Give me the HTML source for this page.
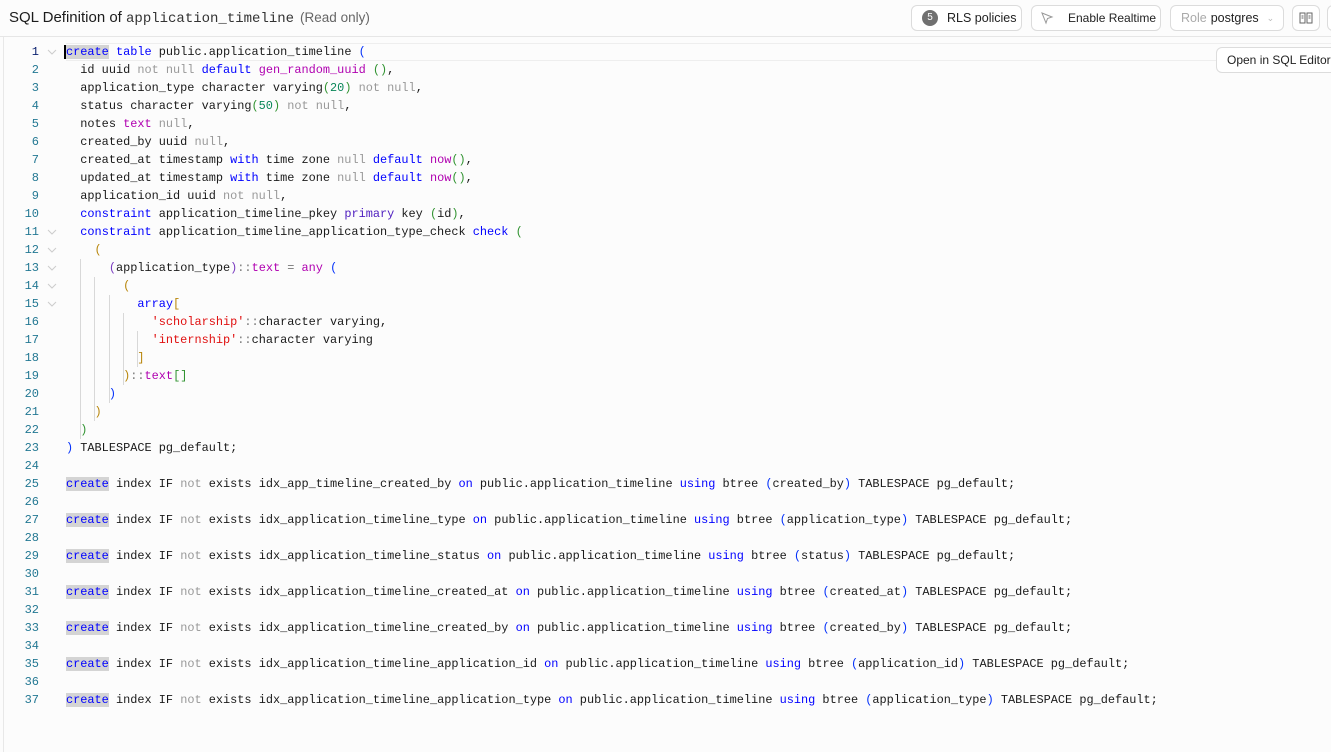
<!DOCTYPE html>
<html><head><meta charset="utf-8"><style>
*{margin:0;padding:0;box-sizing:border-box}
body{width:1331px;height:752px;overflow:hidden;background:#fcfcfc;font-family:"Liberation Sans",sans-serif;position:relative}
.hdr{position:absolute;left:0;top:0;width:1331px;height:37px;border-bottom:1px solid #e6e6e6;background:#fcfcfc}
.title{position:absolute;left:9px;top:9px;font-size:15px;color:#1c1c1c;white-space:nowrap}
.title .m{font-family:"Liberation Mono",monospace;font-size:14px;color:#333}
.title .r{font-size:13.5px;color:#666;margin-left:6px}
.btn{position:absolute;top:5px;height:26px;border:1px solid #dcdcdc;border-radius:6px;background:#fff;font-size:12.5px;color:#222;display:flex;align-items:center;padding:0 10px;white-space:nowrap}
.btn svg,.btn span{flex-shrink:0}
.lb{position:absolute;left:3px;top:37px;width:1px;height:715px;background:#e8e8e8}
.code{position:absolute;left:0;top:43px;width:1331px;font-family:"Liberation Mono",monospace;font-size:11.9px}
.ln{height:18px;line-height:18px;position:relative;white-space:pre;color:#1a1a1a}
.ln .n{position:absolute;left:0;width:39px;text-align:right;color:#237893;font-size:12px}
.ln .f{position:absolute;left:47px;top:5px;width:10px;height:8px}
.ln .c{position:absolute;left:66px}
.k{color:#0000ff}.g{color:#999}.p{color:#b000b0}.d{color:#098658}.s{color:#e01010}.o{color:#777}
.b1{color:#0431fa}.b2{color:#319331}.b3{color:#b8860b}.b4{color:#7a3cc0}
.hl{background:#d4d4d4}
.gd{position:absolute;width:1px;background:#d8d8d8}
</style></head><body>
<div class="hdr">
<div class="title">SQL Definition of <span class="m">application_timeline</span><span class="r">(Read only)</span></div>
<div class="btn" style="left:911px;width:111px"><span style="display:inline-block;width:16px;height:16px;border-radius:50%;background:#707070;color:#fff;font-size:10px;text-align:center;line-height:16px;margin-right:9px">5</span>RLS policies</div>
<div class="btn" style="left:1031px;width:130px;padding:0 8px"><svg width="14" height="14" viewBox="0 0 14 14" style="margin-right:14px"><path d="M2 2 L12 6 L7.5 7.5 L6 12 Z" fill="none" stroke="#999" stroke-width="1"/></svg><span style="font-size:12px">Enable Realtime</span></div>
<div class="btn" style="left:1170px;width:114px"><span style="color:#aaa;margin-right:4px">Role</span>postgres<span style="color:#bbb;font-size:9px;margin-left:8px">&#8964;</span></div>
<div class="btn" style="left:1292px;width:28px;padding:0;justify-content:center"><svg width="14" height="12" viewBox="0 0 14 12"><path d="M1 1h5v10H1z M8 1h5v10H8z M2.5 4h2M2.5 6h2M9.5 4h2M9.5 6h2" fill="none" stroke="#666" stroke-width="1"/></svg></div>
<div class="btn" style="left:1327px;width:20px;padding:0"></div>
</div>
<div class="lb"></div>
<div style="position:absolute;left:66px;top:43px;width:1265px;height:18px;border-top:1px solid #eee;border-bottom:1px solid #eee"></div>
<div class="btn" style="left:1216px;top:47px;height:26px;width:130px;font-size:12px">Open in SQL Editor</div>
<div class="code">
<div class="gd" style="left:80px;top:216px;height:180px"></div>
<div class="gd" style="left:94px;top:234px;height:144px"></div>
<div class="gd" style="left:109px;top:252px;height:108px"></div>
<div class="gd" style="left:123px;top:270px;height:72px"></div>
<div class="gd" style="left:137px;top:288px;height:36px"></div>
<div class="ln"><span class="n" style="color:#0b216f">1</span><svg class="f" viewBox="0 0 10 8"><path d="M1 2l4 4 4-4" fill="none" stroke="#ccc"/></svg><span class="c"><span style="border-left:2px solid #000;margin-left:-2px"></span><span class="k hl">create</span> <span class="k">table</span> public.application_timeline <span class="b1">(</span></span></div>
<div class="ln"><span class="n">2</span><span class="c">  id uuid <span class="g">not null</span> <span class="k">default</span> <span class="p">gen_random_uuid</span> <span class="b2">()</span>,</span></div>
<div class="ln"><span class="n">3</span><span class="c">  application_type character varying<span class="b2">(</span><span class="d">20</span><span class="b2">)</span> <span class="g">not null</span>,</span></div>
<div class="ln"><span class="n">4</span><span class="c">  status character varying<span class="b2">(</span><span class="d">50</span><span class="b2">)</span> <span class="g">not null</span>,</span></div>
<div class="ln"><span class="n">5</span><span class="c">  notes <span class="p">text</span> <span class="g">null</span>,</span></div>
<div class="ln"><span class="n">6</span><span class="c">  created_by uuid <span class="g">null</span>,</span></div>
<div class="ln"><span class="n">7</span><span class="c">  created_at timestamp <span class="k">with</span> time zone <span class="g">null</span> <span class="k">default</span> <span class="p">now</span><span class="b2">()</span>,</span></div>
<div class="ln"><span class="n">8</span><span class="c">  updated_at timestamp <span class="k">with</span> time zone <span class="g">null</span> <span class="k">default</span> <span class="p">now</span><span class="b2">()</span>,</span></div>
<div class="ln"><span class="n">9</span><span class="c">  application_id uuid <span class="g">not null</span>,</span></div>
<div class="ln"><span class="n">10</span><span class="c">  <span class="k">constraint</span> application_timeline_pkey <span style="color:#5020c0">primary</span> key <span class="b2">(</span>id<span class="b2">)</span>,</span></div>
<div class="ln"><span class="n">11</span><svg class="f" viewBox="0 0 10 8"><path d="M1 2l4 4 4-4" fill="none" stroke="#ccc"/></svg><span class="c">  <span class="k">constraint</span> application_timeline_application_type_check <span class="k">check</span> <span class="b2">(</span></span></div>
<div class="ln"><span class="n">12</span><svg class="f" viewBox="0 0 10 8"><path d="M1 2l4 4 4-4" fill="none" stroke="#ccc"/></svg><span class="c">    <span class="b3">(</span></span></div>
<div class="ln"><span class="n">13</span><svg class="f" viewBox="0 0 10 8"><path d="M1 2l4 4 4-4" fill="none" stroke="#ccc"/></svg><span class="c">      <span class="b4">(</span>application_type<span class="b4">)</span><span class="o">::</span><span class="p">text</span> <span class="o">=</span> <span class="p">any</span> <span class="b1">(</span></span></div>
<div class="ln"><span class="n">14</span><svg class="f" viewBox="0 0 10 8"><path d="M1 2l4 4 4-4" fill="none" stroke="#ccc"/></svg><span class="c">        <span class="b3">(</span></span></div>
<div class="ln"><span class="n">15</span><svg class="f" viewBox="0 0 10 8"><path d="M1 2l4 4 4-4" fill="none" stroke="#ccc"/></svg><span class="c">          <span class="k">array</span><span class="b3">[</span></span></div>
<div class="ln"><span class="n">16</span><span class="c">            <span class="s">'scholarship'</span><span class="o">::</span>character varying,</span></div>
<div class="ln"><span class="n">17</span><span class="c">            <span class="s">'internship'</span><span class="o">::</span>character varying</span></div>
<div class="ln"><span class="n">18</span><span class="c">          <span class="b3">]</span></span></div>
<div class="ln"><span class="n">19</span><span class="c">        <span class="b3">)</span><span class="o">::</span><span class="p">text</span><span class="b2">[]</span></span></div>
<div class="ln"><span class="n">20</span><span class="c">      <span class="b1">)</span></span></div>
<div class="ln"><span class="n">21</span><span class="c">    <span class="b3">)</span></span></div>
<div class="ln"><span class="n">22</span><span class="c">  <span class="b2">)</span></span></div>
<div class="ln"><span class="n">23</span><span class="c"><span class="b1">)</span> TABLESPACE pg_default;</span></div>
<div class="ln"><span class="n">24</span></div>
<div class="ln"><span class="n">25</span><span class="c"><span class="k hl">create</span> index IF <span class="g">not</span> exists idx_app_timeline_created_by <span class="k">on</span> public.application_timeline <span class="k">using</span> btree <span class="b1">(</span>created_by<span class="b1">)</span> TABLESPACE pg_default;</span></div>
<div class="ln"><span class="n">26</span></div>
<div class="ln"><span class="n">27</span><span class="c"><span class="k hl">create</span> index IF <span class="g">not</span> exists idx_application_timeline_type <span class="k">on</span> public.application_timeline <span class="k">using</span> btree <span class="b1">(</span>application_type<span class="b1">)</span> TABLESPACE pg_default;</span></div>
<div class="ln"><span class="n">28</span></div>
<div class="ln"><span class="n">29</span><span class="c"><span class="k hl">create</span> index IF <span class="g">not</span> exists idx_application_timeline_status <span class="k">on</span> public.application_timeline <span class="k">using</span> btree <span class="b1">(</span>status<span class="b1">)</span> TABLESPACE pg_default;</span></div>
<div class="ln"><span class="n">30</span></div>
<div class="ln"><span class="n">31</span><span class="c"><span class="k hl">create</span> index IF <span class="g">not</span> exists idx_application_timeline_created_at <span class="k">on</span> public.application_timeline <span class="k">using</span> btree <span class="b1">(</span>created_at<span class="b1">)</span> TABLESPACE pg_default;</span></div>
<div class="ln"><span class="n">32</span></div>
<div class="ln"><span class="n">33</span><span class="c"><span class="k hl">create</span> index IF <span class="g">not</span> exists idx_application_timeline_created_by <span class="k">on</span> public.application_timeline <span class="k">using</span> btree <span class="b1">(</span>created_by<span class="b1">)</span> TABLESPACE pg_default;</span></div>
<div class="ln"><span class="n">34</span></div>
<div class="ln"><span class="n">35</span><span class="c"><span class="k hl">create</span> index IF <span class="g">not</span> exists idx_application_timeline_application_id <span class="k">on</span> public.application_timeline <span class="k">using</span> btree <span class="b1">(</span>application_id<span class="b1">)</span> TABLESPACE pg_default;</span></div>
<div class="ln"><span class="n">36</span></div>
<div class="ln"><span class="n">37</span><span class="c"><span class="k hl">create</span> index IF <span class="g">not</span> exists idx_application_timeline_application_type <span class="k">on</span> public.application_timeline <span class="k">using</span> btree <span class="b1">(</span>application_type<span class="b1">)</span> TABLESPACE pg_default;</span></div>
</div>
</body></html>
